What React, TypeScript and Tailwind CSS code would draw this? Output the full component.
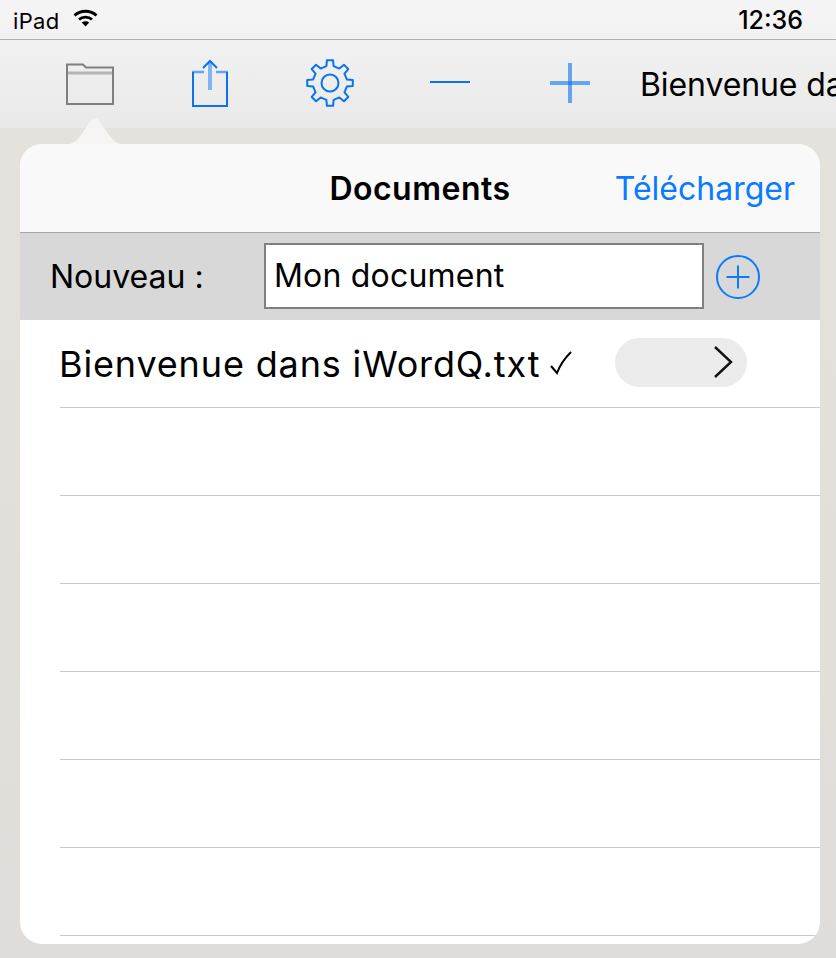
import React from "react";

const gearPath = (() => {
  const cx = 24, cy = 24, n = 8;
  const pts: string[] = [];
  for (let i = 0; i < n; i++) {
    const a = (i * 2 * Math.PI) / n - Math.PI / 2;
    const step = (2 * Math.PI) / n;
    const list: [number, number][] = [
      [-0.27 * step, 17.2], [-0.17 * step, 23], [0.17 * step, 23], [0.27 * step, 17.2],
    ];
    for (const [d, r] of list) {
      pts.push(`${(cx + r * Math.cos(a + d)).toFixed(2)} ${(cy + r * Math.sin(a + d)).toFixed(2)}`);
    }
  }
  return "M" + pts.join("L") + "Z";
})();

function Tool({ children }: { children: React.ReactNode }) {
  return <div className="w-[120px] h-full shrink-0 flex items-center justify-center">{children}</div>;
}

function Row({ children }: { children?: React.ReactNode }) {
  return (
    <div className="h-[88px] shrink-0 ml-10 border-b border-[#c8c7cc] flex items-center">{children}</div>
  );
}

export default function App() {
  const font = { fontFamily: "Inter, 'Liberation Sans', sans-serif" };
  return (
    <div
      style={font}
      className="relative w-[836px] h-[958px] overflow-hidden flex flex-col bg-gradient-to-b from-[#e6e2dc] to-[#e0dcd9] text-black"
    >
      <div className="h-[128px] shrink-0 flex flex-col bg-gradient-to-b from-[#f5f5f5] to-[#e9e9e9]">
        <div className="h-10 shrink-0 border-b border-[#b0b0b0] flex items-center justify-between pl-[13px] pr-[33px]">
          <div className="flex items-center gap-[14px]">
            <span className="text-[22px] leading-none tracking-[0.3px] mt-[2px]">iPad</span>
            <svg width="25" height="18" viewBox="0 0 25 18" className="-mt-1">
              <path d="M1.5 6.5C7.5 0.8 17.5 0.8 23.5 6.5" fill="none" stroke="#000" strokeWidth="2.8" />
              <path d="M6 10.5C9.5 7.3 15.5 7.3 19 10.5" fill="none" stroke="#000" strokeWidth="2.8" />
              <path d="M8.8 13.6C11 11.7 14 11.7 16.2 13.6L12.5 17.5Z" fill="#000" />
            </svg>
          </div>
          <span className="text-[25px] leading-none font-medium mt-[2px]">12:36</span>
        </div>
        <div className="flex-1 flex items-center pl-[30px] overflow-hidden">
          <Tool>
            <svg width="48" height="42" viewBox="0 0 48 42" fill="none">
              <path d="M1 41V1.5H17L20 4.5H47V41Z" stroke="#7f7f7f" strokeWidth="2" />
              <path d="M2 10H46" stroke="#b4b4b4" strokeWidth="3" />
            </svg>
          </Tool>
          <Tool>
            <svg width="36" height="48" viewBox="0 0 36 48" fill="none" className="mb-[2px]">
              <path d="M1 13V47H35V13" stroke="#0a74ee" strokeWidth="2" />
              <path d="M0 13H12M24 13H36" stroke="#0a74ee" strokeOpacity="0.6" strokeWidth="2.5" />
              <path d="M18 2V31" stroke="#7db5f5" strokeWidth="4" />
              <path d="M11 9L18 2L25 9" stroke="#0a74ee" strokeWidth="2" />
            </svg>
          </Tool>
          <Tool>
            <svg width="48" height="48" viewBox="0 0 48 48" fill="none" className="mb-[2px]">
              <path d={gearPath} stroke="#0a74ee" strokeWidth="2" strokeLinejoin="round" />
              <circle cx="24" cy="24" r="8.5" stroke="#0a74ee" strokeWidth="2" />
            </svg>
          </Tool>
          <Tool>
            <div className="w-10 h-[2px] bg-[#0a74ee] mb-[5px]" />
          </Tool>
          <Tool>
            <svg width="40" height="40" viewBox="0 0 40 40" className="mb-[2px]">
              <path d="M0 20H40" stroke="#0a74ee" strokeOpacity="0.6" strokeWidth="4" />
              <path d="M20 0V40" stroke="#0a74ee" strokeOpacity="0.6" strokeWidth="4" />
            </svg>
          </Tool>
          <span className="ml-[10px] text-[32px] leading-none whitespace-nowrap mt-[1px] tracking-[-0.1px]">
            Bienvenue dans iWordQ.txt
          </span>
        </div>
      </div>

      <svg width="72" height="30" viewBox="0 0 72 30" className="absolute left-[59px] top-[116px]">
        <path d="M0 29C12 29 16 27 22 19L31 6C34 1 38 1 41 6L50 19C56 27 60 29 72 29V30H0Z" fill="#f6f5f3" />
      </svg>

      <div className="relative ml-5 mt-4 w-[800px] h-[800px] rounded-[22px] bg-white overflow-hidden flex flex-col">
        <div className="h-[89px] shrink-0 bg-[#f9f9f9] border-b border-[#a6a6a6] relative flex items-center justify-center">
          <span className="text-[32px] leading-none font-semibold tracking-[0.5px] mt-[1px]">Documents</span>
          <span className="absolute right-[25px] top-[27px] text-[32px] leading-[36px] text-[#0a7aff]">
            Télécharger
          </span>
        </div>
        <div className="h-[87px] shrink-0 bg-[#d8d8d8] flex items-center">
          <span className="ml-[30px] w-[214px] shrink-0 text-[32px] leading-none">Nouveau :</span>
          <div className="w-[440px] h-[66px] -mt-[1px] shrink-0 bg-white border-2 border-[#808080] flex items-center pl-[8px] text-[32px] tracking-[0.2px]">
            Mon document
          </div>
          <svg width="46" height="46" viewBox="0 0 46 46" fill="none" className="ml-[11px] shrink-0">
            <circle cx="23" cy="23" r="21" stroke="#0a7aff" strokeWidth="2" />
            <path d="M11.5 23H34.5M23 11.5V34.5" stroke="#0a7aff" strokeWidth="2" />
          </svg>
        </div>
        <div className="flex flex-col">
          <Row>
            <span className="text-[36px] leading-none whitespace-nowrap tracking-[0.85px] -ml-[1px]">
              Bienvenue dans iWordQ.txt
            </span>
            <svg width="22" height="24" viewBox="0 0 22 24" fill="none" className="ml-[10px] shrink-0 -mt-[2px]">
              <path d="M1 15L7 22C10 14 15 7 21 1" stroke="#000" strokeWidth="2" />
            </svg>
            <div className="ml-[43px] w-[132px] h-[49px] -mt-[3px] rounded-full bg-[#ebebeb] shrink-0 flex items-center justify-end pr-[14px]">
              <svg width="20" height="34" viewBox="0 0 20 34" fill="none">
                <path d="M2 2L18 17L2 32" stroke="#111" strokeWidth="2.4" />
              </svg>
            </div>
          </Row>
          <Row />
          <Row />
          <Row />
          <Row />
          <Row />
          <Row />
        </div>
      </div>
    </div>
  );
}
